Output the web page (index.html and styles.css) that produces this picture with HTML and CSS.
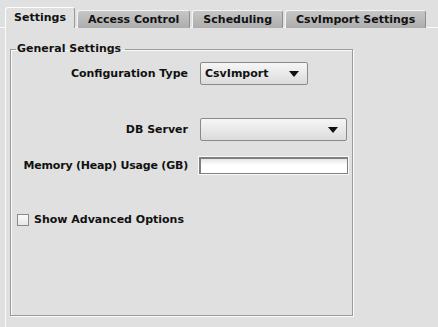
FILE: index.html
```html
<!DOCTYPE html>
<html lang="en">
  <head>
    <meta charset="UTF-8" />
    <title>Settings</title>
    <link rel="stylesheet" href="styles.css">
  </head>
  <body>
    <nav class="tabs">
      <button class="tab valgt">Settings</button>
      <button class="tab">Access Control</button>
      <button class="tab">Scheduling</button>
      <button class="tab">CsvImport Settings</button>
    </nav>

    <main class="panel">
      <fieldset class="gruppe">
        <legend>General Settings</legend>
        <div class="form">
          <label class="etiket">Configuration Type</label>
          <div class="combo kort">
            <span>CsvImport</span>
            <span class="pil"></span>
          </div>

          <label class="etiket db">DB Server</label>
          <div class="combo lang db">
            <span></span>
            <span class="pil"></span>
          </div>

          <label class="etiket mem">Memory (Heap) Usage (GB)</label>
          <input class="felt" type="text" />
        </div>

        <label class="tjek">
          <span class="boks"></span>
          Show Advanced Options
        </label>
      </fieldset>
    </main>
  </body>
</html>
```

FILE: styles.css
```css
body {
  margin: 0;
  background-color: #e0e0e0;
  font-family: "DejaVu Sans", sans-serif;
  font-size: 11px;
  font-weight: bold;
  color: #111;
  height: 327px;
  overflow: hidden;
  white-space: nowrap;
}

.tabs {
  display: flex;
  align-items: flex-end;
  padding: 7px 0 0 5px;
  border-bottom: 1px solid #fafafa;
}

.tab {
  font: inherit;
  color: #111;
  white-space: nowrap;
  height: 18px;
  margin-right: 2px;
  margin-bottom: -1px;
  padding: 0 10px;
  border: 1px solid #f4f4f4;
  border-right-color: #8e8e8e;
  border-bottom: none;
  border-radius: 3px 3px 0 0;
  background: linear-gradient(#c6c6c6, #adadad);
}

.valgt {
  height: 21px;
  padding: 0 8px 2px;
  background: #e0e0e0;
  border-color: #fdfdfd;
  border-right-color: #9a9a9a;
}

.panel {
  margin-left: 5px;
  border-left: 1px solid #fafafa;
  height: 300px;
  padding: 15px 0 0 4px;
}

.gruppe {
  margin: 0;
  width: 343px;
  height: 273px;
  box-sizing: border-box;
  padding: 0 0 0 6px;
  border: 1px solid #9a9a9a;
  box-shadow: 1px 1px 0 #fafafa, inset 1px 1px 0 #fafafa;
}

.gruppe legend {
  padding: 0 4px 0 1px;
  margin-left: -1px;
  line-height: 12px;
}

.form {
  display: grid;
  grid-template-columns: 177px auto;
  column-gap: 12px;
  row-gap: 16px;
  align-items: center;
  margin-top: 7px;
  margin-left: -6px;
}

.etiket {
  text-align: right;
}

.etiket.db {
  margin-top: 17px;
}

.etiket.mem {
  letter-spacing: -0.2px;
}

.combo {
  display: flex;
  align-items: center;
  justify-content: space-between;
  height: 21px;
  padding: 0 8px 0 4px;
  border: 1px solid #8a8a8a;
  border-radius: 2px;
  background: linear-gradient(#f6f6f6, #dcdcdc);
}

.combo.kort {
  width: 94px;
}

.combo.lang {
  width: 133px;
  margin-top: 17px;
}

.pil {
  width: 0;
  height: 0;
  border-left: 5px solid transparent;
  border-right: 5px solid transparent;
  border-top: 6px solid #111;
}

.felt {
  width: 146px;
  height: 14px;
  margin: 0 0 0 -1px;
  padding: 0;
  border: 2px solid #7f7f7f;
  border-right-width: 1px;
  border-bottom-width: 1px;
  box-shadow: 0 0 0 1px #fafafa;
  background: linear-gradient(#e6e6e6, #ffffff 6px);
}

.tjek {
  display: flex;
  align-items: center;
  gap: 5px;
  margin-top: 39px;
}

.boks {
  width: 10px;
  height: 10px;
  border: 1px solid #8a8a8a;
  background: linear-gradient(#fbfbfb, #e6e6e6);
}
```
